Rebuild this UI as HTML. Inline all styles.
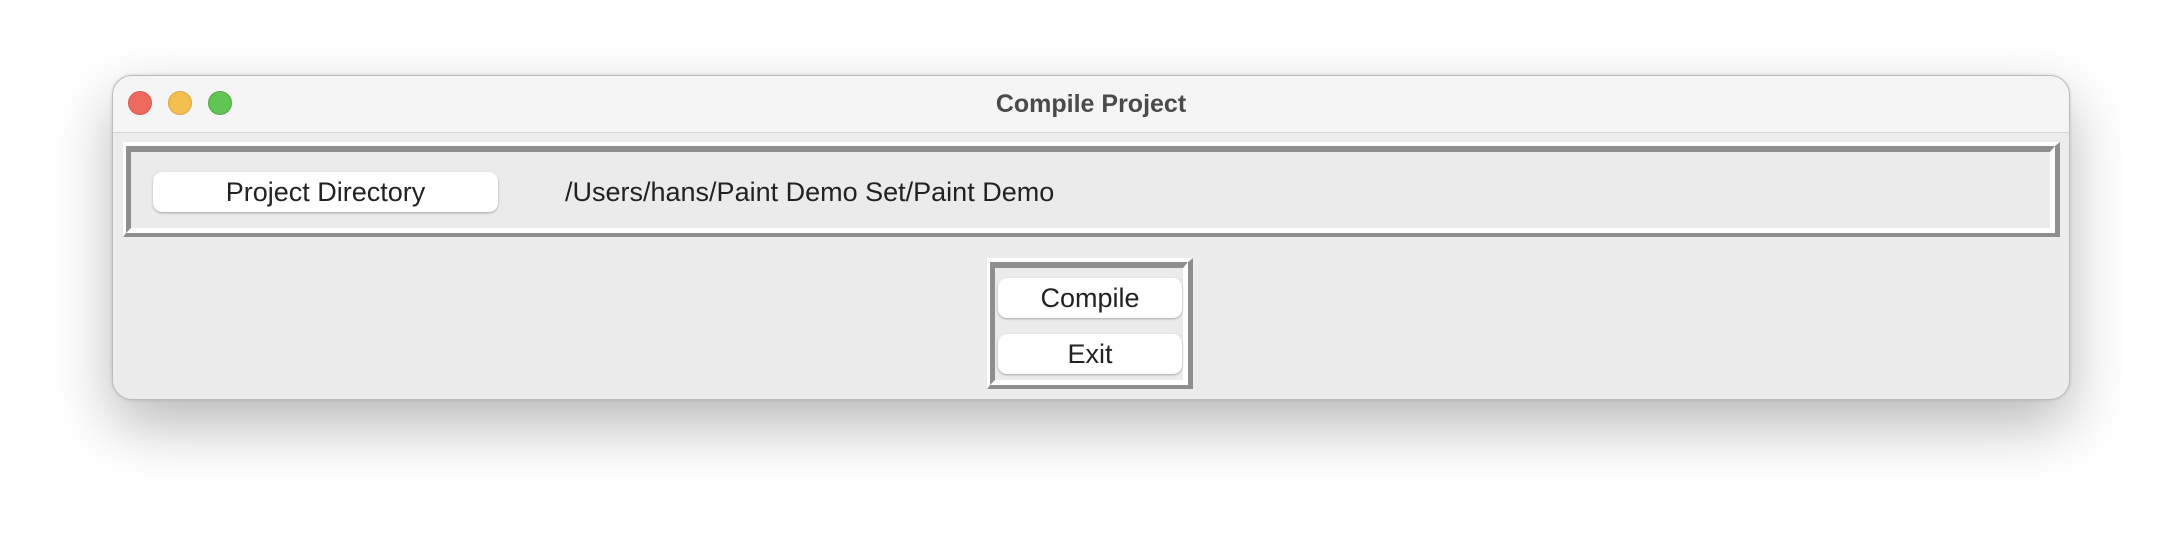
<!DOCTYPE html>
<html><head><style>
*{box-sizing:border-box;margin:0;padding:0}
body{width:2182px;height:548px;background:#fff;position:relative;overflow:hidden;font-family:"Liberation Sans",Arial,sans-serif}
.win{position:absolute;left:112px;top:75px;width:1958px;height:325px;border-radius:20px;background:#ececec;border:1px solid #bdbdbd;overflow:hidden;box-shadow:0 25px 60px rgba(0,0,0,0.28),0 0 3px rgba(0,0,0,0.15)}
.title{position:absolute;left:0;top:0;right:0;height:57px;background:#f5f5f5;border-bottom:1px solid #d3d3d3;text-align:center;line-height:56px;font-weight:bold;font-size:25px;color:#4a4a4a}
.dot{position:absolute;top:15px;width:24px;height:24px;border-radius:50%}
.frame{position:absolute;border-style:solid;border-width:4px 5px 4px 3px;border-color:#fff #8e8e8e #8e8e8e #fff}
.inner{position:absolute;inset:0;border-style:solid;border-width:6px 5px 5px 5px;border-color:#8e8e8e #fff #fff #8e8e8e;background:#ebebeb}
.btn{position:absolute;background:#fff;border-radius:9px;box-shadow:0 1px 2px rgba(0,0,0,0.3);text-align:center;font-size:27px;color:#222}
</style></head><body>
<div class="win">
 <div class="title">Compile Project
  <div class="dot" style="left:15px;background:#ee6a5e;border:1px solid #d85a4f"></div>
  <div class="dot" style="left:55px;background:#f5bf4f;border:1px solid #d9a53e"></div>
  <div class="dot" style="left:95px;background:#61c554;border:1px solid #52a845"></div>
 </div>
 <div class="frame" style="left:10px;top:66px;width:1937px;height:95px"><div class="inner"></div></div>
 <div class="btn" style="left:40px;top:96px;width:345px;height:40px;line-height:40px">Project Directory</div>
 <div style="position:absolute;left:452px;top:96px;line-height:40px;font-size:27px;color:#222">/Users/hans/Paint Demo Set/Paint Demo</div>
 <div class="frame" style="left:874px;top:182px;width:206px;height:131px"><div class="inner"></div></div>
 <div class="btn" style="left:885px;top:202px;width:184px;height:40px;line-height:40px">Compile</div>
 <div class="btn" style="left:885px;top:258px;width:184px;height:40px;line-height:40px">Exit</div>
</div>
</body></html>
